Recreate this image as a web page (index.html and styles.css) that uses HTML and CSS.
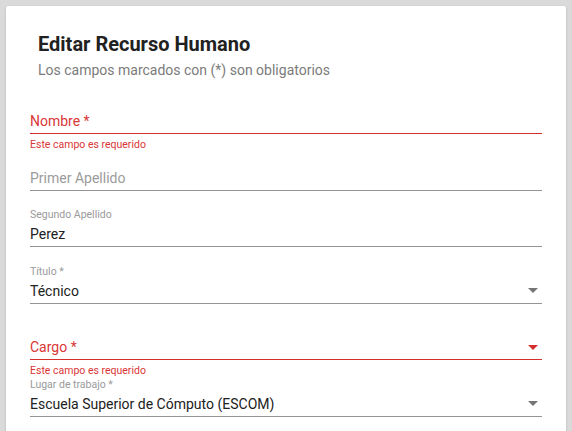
FILE: index.html
```html
<!DOCTYPE html>
<html lang="es">
<head>
<meta charset="utf-8">
<title>Editar Recurso Humano</title>
<link rel="stylesheet" href="styles.css">
</head>
<body>
<div class="card">
  <div class="card-header">
    <h1 class="title">Editar Recurso Humano</h1>
    <p class="subtitle">Los campos marcados con (*) son obligatorios</p>
  </div>
  <form class="form">
    <div class="field invalid">
      <div class="field-label"></div>
      <div class="field-input"><span class="placeholder">Nombre *</span></div>
      <div class="field-line"></div>
      <div class="field-sub">Este campo es requerido</div>
    </div>
    <div class="field">
      <div class="field-label"></div>
      <div class="field-input"><span class="placeholder">Primer Apellido</span></div>
      <div class="field-line"></div>
      <div class="field-sub"></div>
    </div>
    <div class="field">
      <div class="field-label">Segundo Apellido</div>
      <div class="field-input"><span class="value">Perez</span></div>
      <div class="field-line"></div>
      <div class="field-sub"></div>
    </div>
    <div class="field select">
      <div class="field-label">Título *</div>
      <div class="field-input"><span class="value">Técnico</span><span class="arrow"></span></div>
      <div class="field-line"></div>
      <div class="field-sub"></div>
    </div>
    <div class="field select invalid">
      <div class="field-label"></div>
      <div class="field-input"><span class="placeholder">Cargo *</span><span class="arrow"></span></div>
      <div class="field-line"></div>
      <div class="field-sub tight">Este campo es requerido</div>
    </div>
    <div class="field select">
      <div class="field-label">Lugar de trabajo *</div>
      <div class="field-input"><span class="value">Escuela Superior de Cómputo (ESCOM)</span><span class="arrow"></span></div>
      <div class="field-line"></div>
      <div class="field-sub"></div>
    </div>
  </form>
</div>
</body>
</html>
```

FILE: styles.css
```css
html, body {
  margin: 0;
  padding: 0;
}
body {
  background: #dadada;
  font-family: Roboto, "Liberation Sans", Arial, sans-serif;
  height: 431px;
  overflow: hidden;
}
.card {
  margin: 6px 0 0 6px;
  width: 560px;
  min-height: 500px;
  background: #ffffff;
  border-radius: 2px;
  box-shadow: 0 1px 3px rgba(0,0,0,0.15);
}
.card-header {
  padding: 26px 32px 0 32px;
}
.title {
  margin: 0;
  font-size: 20px;
  line-height: 24px;
  font-weight: 700;
  color: #212121;
}
.subtitle {
  margin: 4px 0 0 0;
  font-size: 14px;
  line-height: 20px;
  color: #7b7b7b;
}
.form {
  padding: 13px 24px 0 24px;
  display: flex;
  flex-direction: column;
}
.field {
  display: flex;
  flex-direction: column;
}
.field-label {
  height: 16px;
  font-size: 10.5px;
  line-height: 14px;
  color: #9a9a9a;
  padding-top: 2px;
  box-sizing: border-box;
}
.field-input {
  height: 24px;
  display: flex;
  align-items: center;
  justify-content: space-between;
  font-size: 14px;
}
.placeholder {
  color: #9b9b9b;
}
.value {
  color: #212121;
}
.field-line {
  height: 1px;
  background: #949494;
}
.field-sub {
  height: 15.6px;
  padding-top: 4px;
  box-sizing: border-box;
  font-size: 10.5px;
  line-height: 13px;
  color: #d93636;
}
.field-sub.tight {
  padding-top: 4px;
}
.arrow {
  width: 0;
  height: 0;
  border-left: 5px solid transparent;
  border-right: 5px solid transparent;
  border-top: 5px solid #757575;
  margin-right: 4px;
}
.invalid .placeholder {
  color: #d93636;
}
.invalid .field-line {
  background: #d32f2f;
}
.invalid .arrow {
  border-top-color: #d32f2f;
}
```
